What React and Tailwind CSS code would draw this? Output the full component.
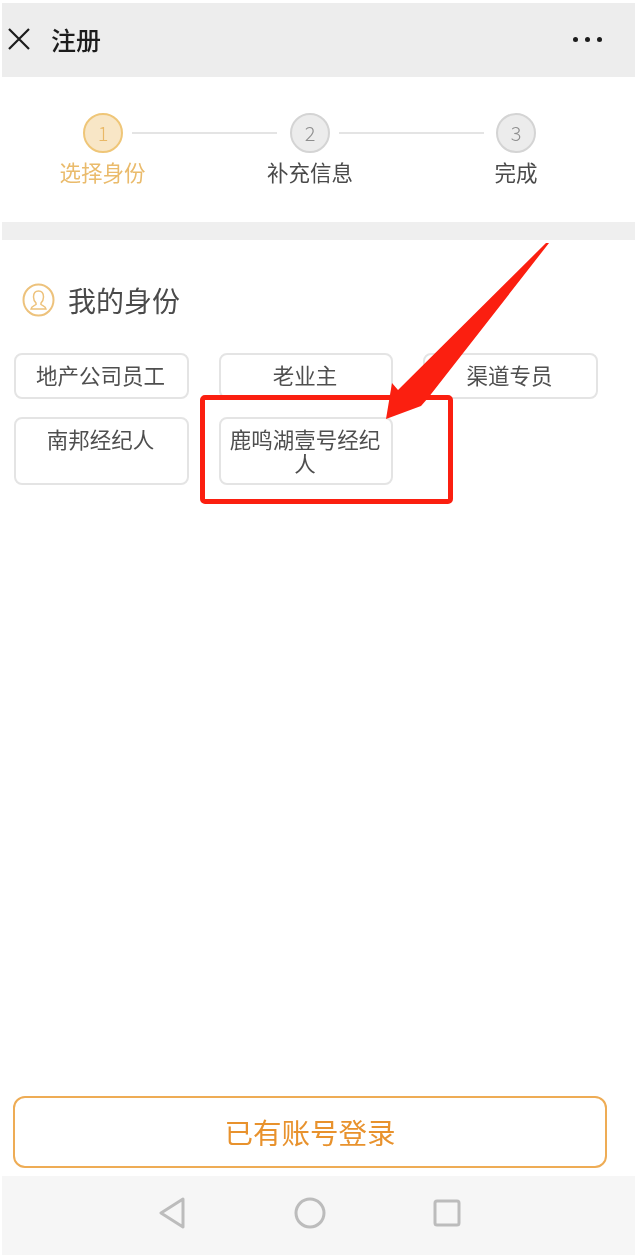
const font = { fontFamily: '"Noto Sans CJK SC", "Noto Sans", sans-serif' };

const roles = [
  { name: '地产公司员工', h: 'h-[46px]' },
  { name: '老业主', h: 'h-[46px]' },
  { name: '渠道专员', h: 'h-[46px]' },
  { name: '南邦经纪人', h: 'h-[68px]' },
  { name: '鹿鸣湖壹号经纪人', h: 'h-[68px]' },
];

const StepCircle = ({ n, active }) => (
  <div
    className={`w-10 h-10 shrink-0 rounded-full border-2 flex items-center justify-center text-[20px] font-light ${
      active
        ? 'bg-[#f8e6c6] border-[#efc678] text-[#e9b866]'
        : 'bg-[#ececec] border-[#d4d4d4] text-[#8e8e8e]'
    }`}
  >
    {n}
  </div>
);

const App = () => {
  return (
    <div className="relative w-[640px] h-[1260px] bg-white overflow-hidden blur-[0.6px]" style={font}>
      <div className="h-full flex flex-col pt-[3px] pl-[2px] pr-[5px] pb-[5px]">
        {/* header */}
        <div className="h-[74px] shrink-0 bg-[#ededed] flex items-center pl-[5px] pr-[33px] pb-[2px] text-[#1c1c1c]">
          <svg width="24" height="24" viewBox="0 0 24 24" fill="none" stroke="#1c1c1c" strokeWidth="2.2">
            <path d="M2 2 L22 22 M22 2 L2 22" />
          </svg>
          <div className="ml-[20px] text-[25px] font-medium leading-none">注册</div>
          <div className="ml-auto flex gap-[7px]">
            <span className="w-[5px] h-[5px] rounded-full bg-[#1c1c1c]" />
            <span className="w-[5px] h-[5px] rounded-full bg-[#1c1c1c]" />
            <span className="w-[5px] h-[5px] rounded-full bg-[#1c1c1c]" />
          </div>
        </div>

        {/* steps */}
        <div className="h-[145px] shrink-0 pt-[36px]">
          <div className="flex items-center pl-[81px]">
            <StepCircle n="1" active />
            <div className="ml-[9px] w-[145px] h-[2px] bg-[#e4e4e4]" />
            <div className="ml-[13px]"><StepCircle n="2" /></div>
            <div className="ml-[9px] w-[145px] h-[2px] bg-[#e4e4e4]" />
            <div className="ml-[12px]"><StepCircle n="3" /></div>
          </div>
          <div className="flex text-[21.5px] leading-[30px] mt-[4px] text-center text-[#4a4a4a]">
            <div className="w-[201px] text-[#eabb6c]">选择身份</div>
            <div className="w-[214px]">补充信息</div>
            <div className="w-[198px]">完成</div>
          </div>
        </div>
        <div className="h-[18px] shrink-0 bg-[#efefef]" />

        {/* identity */}
        <div className="flex-1 flex flex-col pt-[42px]">
          <div className="flex items-center pl-[20px]">
            <svg width="33" height="34" viewBox="0 0 33 34" fill="none" stroke="#edc27c" strokeWidth="2">
              <ellipse cx="16.5" cy="17" rx="15" ry="15.5" />
              <path d="M16.5 8 C12.5 8 11.5 11 11.5 14 C11.5 17 13 19 14 20 L14 21.5 C12 23 9.5 23 9 26 L24 26 C23.5 23 21 23 19 21.5 L19 20 C20 19 21.5 17 21.5 14 C21.5 11 20.5 8 16.5 8 Z" strokeWidth="1.5" />
            </svg>
            <div className="ml-[13px] text-[28px] leading-[36px] text-[#4a4a4a]">我的身份</div>
          </div>

          <div className="mt-[35px] ml-[12px] grid grid-cols-[175px_174px_175px] gap-x-[30px] gap-y-[18px] items-start">
            {roles.map((r) => (
              <div
                key={r.name}
                className={`${r.h} rounded-[8px] border-2 border-[#e4e4e4] pl-[8px] pr-[10px] pt-[8px] text-center text-[21.5px] leading-[24px] text-[#4f4f4f]`}
              >
                {r.name}
              </div>
            ))}
          </div>

          <div className="mt-auto mb-[8px] ml-[11px] w-[594px] h-[72px] rounded-[12px] border-2 border-[#eeac55] flex items-center justify-center text-[28.5px] text-[#e8922d]">
            已有账号登录
          </div>
        </div>

        {/* android nav */}
        <div className="h-[79px] shrink-0 bg-[#f6f6f6] flex items-center pl-[156px] pb-[6px]">
          <svg width="28" height="32" viewBox="0 0 28 32" fill="none" stroke="#bcbcbc" strokeWidth="3" strokeLinejoin="round">
            <path d="M25 2 L3 16 L25 30 Z" />
          </svg>
          <svg className="ml-[108px]" width="32" height="32" viewBox="0 0 32 32" fill="none" stroke="#bcbcbc" strokeWidth="3">
            <circle cx="16" cy="16" r="14" />
          </svg>
          <svg className="ml-[107px]" width="28" height="28" viewBox="0 0 28 28" fill="none" stroke="#bcbcbc" strokeWidth="3" strokeLinejoin="round">
            <rect x="2" y="2" width="24" height="24" rx="2" />
          </svg>
        </div>
      </div>

      {/* annotation: red box and arrow */}
      <div className="absolute left-[200px] top-[395px] w-[253px] h-[109px] rounded-[5px] border-[5px] border-[#fb1f10]" />
      <svg className="absolute left-0 top-0" width="640" height="1260" viewBox="0 0 640 1260" fill="#fb1f10">
        <polygon points="549,243 428,398 421,406 386,419 392,383 398,390 546,243" />
      </svg>
    </div>
  );
};

export default App;
